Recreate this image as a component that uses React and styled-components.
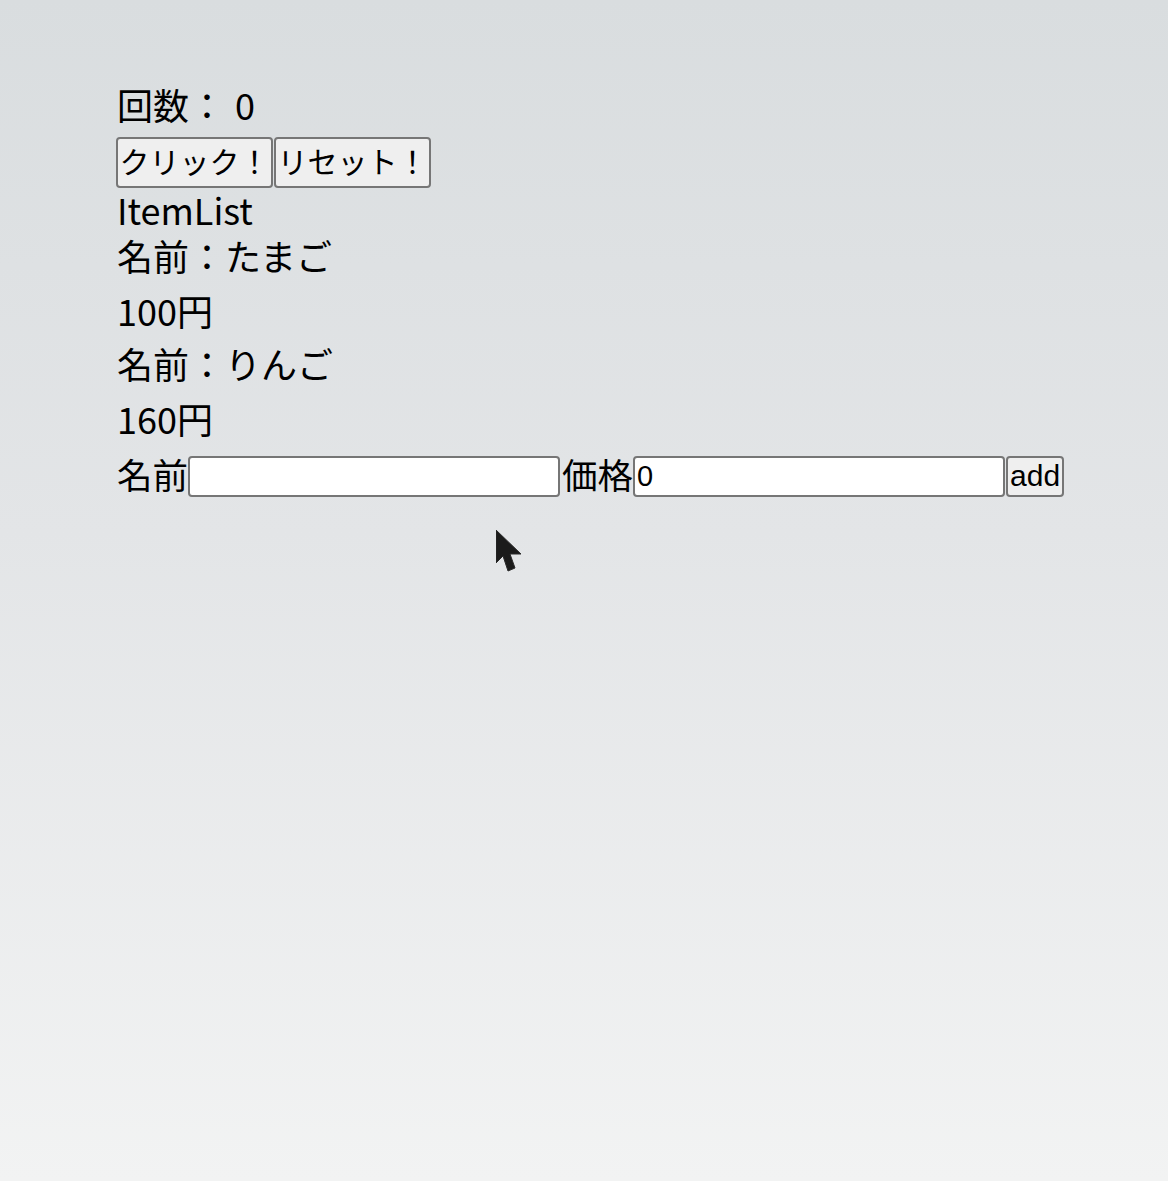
import React, { useState } from 'react';
import styled, { createGlobalStyle } from 'styled-components';

const GlobalStyle = createGlobalStyle`
  html, body {
    margin: 0;
    padding: 0;
  }
  body {
    min-height: 1181px;
    background: linear-gradient(180deg, #d9dddf 0%, #e3e5e7 45%, #f2f3f3 100%);
    font-family: "Noto Sans CJK JP", "Noto Sans", sans-serif;
    color: #000;
  }
`;

const Page = styled.div`
  position: relative;
  min-height: 1181px;
  padding: 81px 0 0 117px;
  box-sizing: border-box;
  font-size: 36px;
`;

const Line = styled.div`
  height: 46px;
  line-height: 46px;
  white-space: nowrap;
`;

const Count = styled.span`
  margin-left: 10px;
`;

const ButtonRow = styled.div`
  display: flex;
  margin: 10px 0 -2px -1px;
`;

const Button = styled.button`
  height: ${p => p.h || 51}px;
  padding: 0 ${p => p.px || 1.5}px;
  margin: 0 1px 0 0;
  font-family: "Liberation Sans", "Noto Sans CJK JP", sans-serif;
  font-size: 30px;
  line-height: 1;
  color: #000;
  background: #efefef;
  border: 2px solid #767676;
  border-radius: 4px;
`;

const ItemList = styled.div`
  display: flex;
  flex-direction: column;
  gap: 7px;
`;

const Item = styled.div`
  display: flex;
  flex-direction: column;
  gap: 9px;
`;

const Form = styled.div`
  display: flex;
  align-items: center;
  height: 46px;
  margin-top: 12px;
`;

const Label = styled.span`
  font-size: 35.5px;
  line-height: 46px;
  position: relative;
  top: -2px;
`;

const Input = styled.input`
  width: 372px;
  height: 41px;
  box-sizing: border-box;
  padding: 0 2px;
  margin: 0 ${p => p.mr || 2}px 0 0;
  font-family: "Liberation Sans", sans-serif;
  font-size: 29px;
  color: #000;
  background: #fff;
  border: 2px solid #767676;
  border-radius: 4px;
  outline: none;
`;

const Cursor = styled.svg`
  position: absolute;
  left: 496px;
  top: 530px;
`;

export default function App() {
  const [count, setCount] = useState(0);
  const [items, setItems] = useState([
    { name: 'たまご', price: 100 },
    { name: 'りんご', price: 160 },
  ]);
  const [name, setName] = useState('');
  const [price, setPrice] = useState(0);

  return (
    <Page>
      <GlobalStyle />
      <Line>
        回数：<Count>{count}</Count>
      </Line>
      <ButtonRow>
        <Button onClick={() => setCount(count + 1)}>クリック！</Button>
        <Button onClick={() => setCount(0)}>リセット！</Button>
      </ButtonRow>
      <Line>ItemList</Line>
      <ItemList>
        {items.map((item, i) => (
          <Item key={i}>
            <Line>名前：{item.name}</Line>
            <Line>{item.price}円</Line>
          </Item>
        ))}
      </ItemList>
      <Form>
        <Label>名前</Label>
        <Input value={name} onChange={e => setName(e.target.value)} />
        <Label>価格</Label>
        <Input mr={1} value={price} onChange={e => setPrice(e.target.value)} />
        <Button
          h={41}
          px={2}
          onClick={() => {
            setItems([...items, { name, price: Number(price) }]);
            setName('');
            setPrice(0);
          }}
        >
          add
        </Button>
      </Form>
      <Cursor width="28" height="44" viewBox="0 0 28 44">
        <polygon
          points="0,0 0,33 7,26 12,41 19,38 14,24 25,24"
          fill="#1b1b1b"
          stroke="#2a2a2a"
          strokeWidth="1"
          strokeLinejoin="round"
        />
      </Cursor>
    </Page>
  );
}
